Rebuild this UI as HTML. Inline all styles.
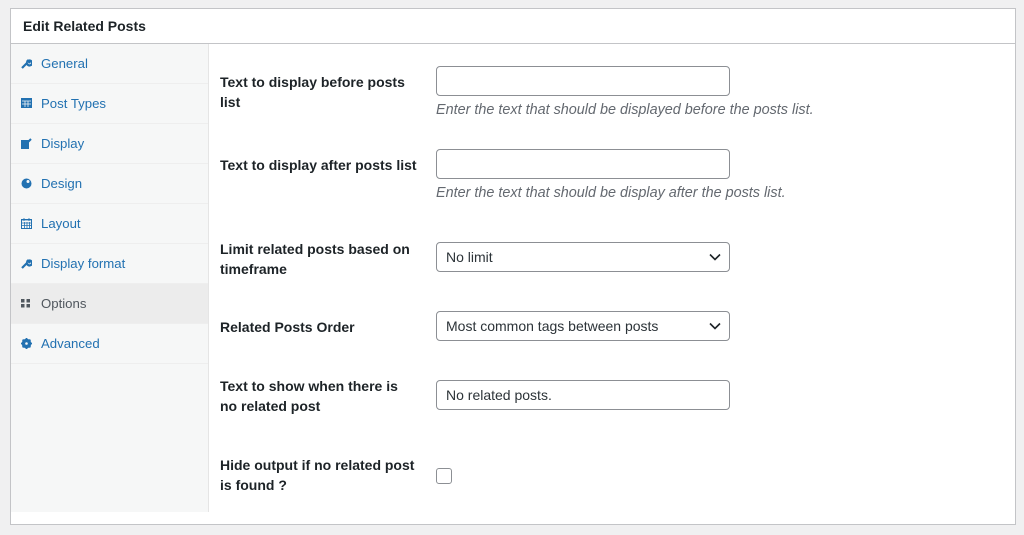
<!DOCTYPE html>
<html><head><style>
body{margin:0;background:#f0f0f1;font-family:"Liberation Sans",Arial,sans-serif;width:1024px;height:535px;position:relative;overflow:hidden}
.panel{position:absolute;left:10px;top:8px;width:1004px;height:515px;background:#fff;border:1px solid #c3c4c7}
.hd{height:34px;border-bottom:1px solid #c3c4c7;font-weight:bold;font-size:14px;color:#1d2327;line-height:34px;padding-left:12px}
.side{position:absolute;left:0;top:35px;width:197px;bottom:12px;background:#f6f7f7;border-right:1px solid #e5e5e5}
.it{height:39px;border-bottom:1px solid #eee;font-size:13.2px;color:#2271b1;line-height:40px;padding-left:30px;position:relative}
.it.a{background:#ececec;color:#50575e}
.it svg{position:absolute;left:10px;top:14px}
.lab{position:absolute;left:209px;font-weight:bold;font-size:14px;color:#1d2327;line-height:20px;width:200px}
.in{position:absolute;left:425px;width:283px;height:28px;border:1px solid #8c8f94;border-radius:4px;font-size:14px;color:#2c3338;line-height:28px;padding-left:9px;box-sizing:content-box}
.desc{position:absolute;left:425px;font-style:italic;color:#646970;font-size:14.4px}
.chev{position:absolute;right:8px;top:10px}
</style></head><body>
<div class="panel">
<div class="hd">Edit Related Posts</div>
<div class="side">
<div class="it"><svg width="11" height="11" viewBox="0 0 11 11"><path d="M1 10l5-5M6 5a2.5 2.5 0 1 0 0-.1M6 2l3 3" stroke="#2271b1" stroke-width="2.2" fill="none"/></svg>General</div>
<div class="it"><svg width="11" height="10" viewBox="0 0 11 10"><rect x="0" y="0" width="11" height="10" fill="#2271b1"/><path d="M1 3h9M1 6h9M4 3v6M7 3v6" stroke="#f6f7f7" stroke-width=".8"/></svg>Post Types</div>
<div class="it"><svg width="11" height="11" viewBox="0 0 11 11"><rect x="0" y="2" width="8" height="9" fill="#2271b1"/><path d="M5 6l5-5" stroke="#2271b1" stroke-width="2"/></svg>Display</div>
<div class="it"><svg width="11" height="11" viewBox="0 0 11 11"><circle cx="5.5" cy="5.5" r="5" fill="#2271b1"/><circle cx="7" cy="3.5" r="1.5" fill="#f6f7f7"/></svg>Design</div>
<div class="it"><svg width="11" height="11" viewBox="0 0 11 11"><rect x=".5" y="1.5" width="10" height="9" fill="none" stroke="#2271b1"/><path d="M0 2h11M3 0v3M8 0v3M1 5h9M1 7.5h9M3.5 4v6M6 4v6M8.5 4v6" stroke="#2271b1" stroke-width=".8"/></svg>Layout</div>
<div class="it"><svg width="11" height="11" viewBox="0 0 11 11"><path d="M1 10l5-5M6 5a2.5 2.5 0 1 0 0-.1M6 2l3 3" stroke="#2271b1" stroke-width="2.2" fill="none"/></svg>Display format</div>
<div class="it a"><svg width="10" height="10" viewBox="0 0 10 10"><rect x="0" y="1" width="3.5" height="3.5" fill="#50575e"/><rect x="5.5" y="1" width="3.5" height="3.5" fill="#50575e"/><rect x="0" y="6" width="3.5" height="3.5" fill="#50575e"/><rect x="5.5" y="6" width="3.5" height="3.5" fill="#50575e"/></svg>Options</div>
<div class="it"><svg width="11" height="11" viewBox="0 0 11 11"><circle cx="5.5" cy="5.5" r="3.6" fill="none" stroke="#2271b1" stroke-width="2.4"/><path d="M5.5 0v11M0 5.5h11M1.6 1.6l7.8 7.8M9.4 1.6l-7.8 7.8" stroke="#2271b1" stroke-width="1.8"/><circle cx="5.5" cy="5.5" r="1.3" fill="#f6f7f7"/></svg>Advanced</div>
</div>
<div class="lab" style="top:63px">Text to display before posts<br>list</div>
<div class="in" style="top:57px"></div>
<div class="desc" style="top:93px">Enter the text that should be displayed before the posts list.</div>
<div class="lab" style="top:146px">Text to display after posts list</div>
<div class="in" style="top:140px"></div>
<div class="desc" style="top:176px">Enter the text that should be display after the posts list.</div>
<div class="lab" style="top:230px">Limit related posts based on<br>timeframe</div>
<div class="in" style="top:233px">No limit<svg class="chev" width="12" height="8" viewBox="0 0 12 8"><path d="M1 1.5l5 5 5-5" fill="none" stroke="#1d2327" stroke-width="1.6"/></svg></div>
<div class="lab" style="top:308px">Related Posts Order</div>
<div class="in" style="top:302px">Most common tags between posts<svg class="chev" width="12" height="8" viewBox="0 0 12 8"><path d="M1 1.5l5 5 5-5" fill="none" stroke="#1d2327" stroke-width="1.6"/></svg></div>
<div class="lab" style="top:367px">Text to show when there is<br>no related post</div>
<div class="in" style="top:371px">No related posts.</div>
<div class="lab" style="top:446px">Hide output if no related post<br>is found ?</div>
<div style="position:absolute;left:425px;top:459px;width:14px;height:14px;border:1px solid #8c8f94;border-radius:3px"></div>
</div>
</body></html>
